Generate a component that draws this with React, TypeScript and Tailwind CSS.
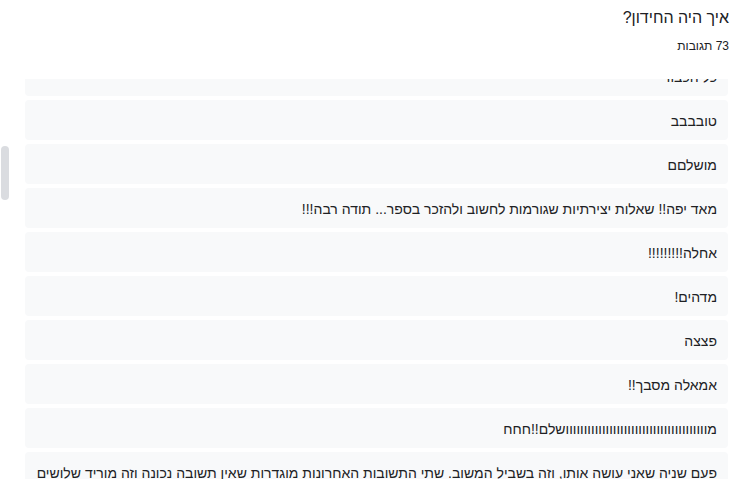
import React from 'react';

const answers: string[] = [
    'כל הכבוד',
    'טובבבב',
    'מושלםם',
    'מאד יפה!! שאלות יצירתיות שגורמות לחשוב ולהזכר בספר... תודה רבה!!!',
    'אחלה!!!!!!!!!',
    'מדהים!',
    'פצצה',
    'אמאלה מסבך!!',
    'מ' + 'ו'.repeat(39) + 'שלם!!חחח',
    'פעם שניה שאני עושה אותו, וזה בשביל המשוב. שתי התשובות האחרונות מוגדרות שאין תשובה נכונה וזה מוריד שלושים נקודות מהציון הסופי שלי',
];

export default function App() {
    return (
        <div
            dir="rtl"
            className="w-[748px] h-[486px] overflow-hidden bg-white text-[#202124] font-['Liberation_Sans',Arial,sans-serif]"
        >
            {/* Header */}
            <div className="pr-[19px] pt-[6px]">
                <div className="text-[16px] leading-6">איך היה החידון?</div>
                <div className="mt-[8px] text-[12px] leading-4">73 תגובות</div>
            </div>

            {/* Answers list */}
            <div className="mt-[25px] flex pr-[20px]">
                <div className="flex-1 h-[400px] overflow-hidden">
                    <div className="-mt-[23px] flex flex-col gap-[4px]">
                        {answers.map((a, i) => (
                            <div key={i} className="bg-[#f8f9fa] rounded-[4px] px-[11px] pt-[11px] pb-[9px] text-[14px] leading-5">
                                {a}
                            </div>
                        ))}
                    </div>
                </div>
                <div className="w-[25px] shrink-0">
                    <div className="ml-[1px] mr-auto mt-[67px] w-[8px] h-[54px] rounded-full bg-[#dadce0]"></div>
                </div>
            </div>
        </div>
    );
}
